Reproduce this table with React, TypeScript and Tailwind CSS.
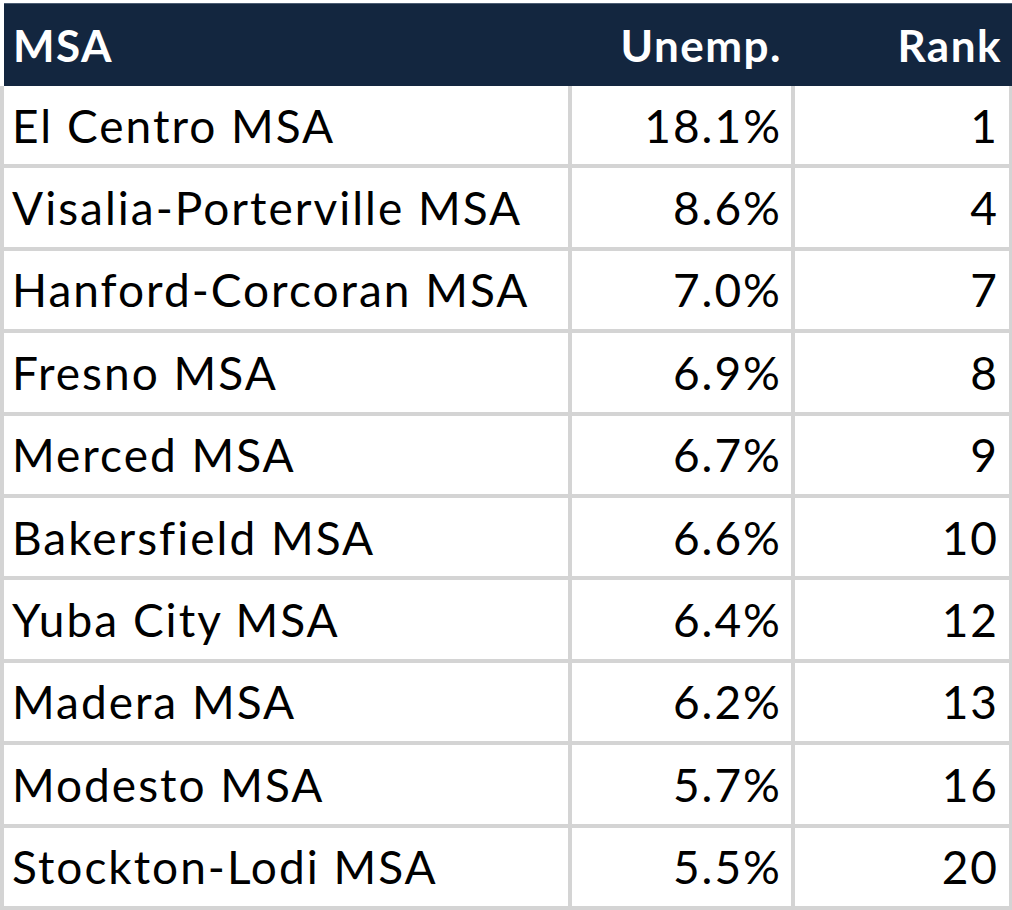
import React from 'react';

const rows = [
  { msa: 'El Centro MSA', unemp: '18.1%', rank: '1' },
  { msa: 'Visalia-Porterville MSA', unemp: '8.6%', rank: '4' },
  { msa: 'Hanford-Corcoran MSA', unemp: '7.0%', rank: '7' },
  { msa: 'Fresno MSA', unemp: '6.9%', rank: '8' },
  { msa: 'Merced MSA', unemp: '6.7%', rank: '9' },
  { msa: 'Bakersfield MSA', unemp: '6.6%', rank: '10' },
  { msa: 'Yuba City MSA', unemp: '6.4%', rank: '12' },
  { msa: 'Madera MSA', unemp: '6.2%', rank: '13' },
  { msa: 'Modesto MSA', unemp: '5.7%', rank: '16' },
  { msa: 'Stockton-Lodi MSA', unemp: '5.5%', rank: '20' },
];

const App = () => {
  return (
    <div
      className="w-[1012px] h-[910px] bg-white overflow-hidden pt-[3px] [font-variant-ligatures:none]"
      style={{ fontFamily: 'Lato, "Liberation Sans", sans-serif' }}
    >
      <div className="ml-[4px] h-[83px] bg-[#13263f] border-t border-[#4b5c72] flex items-center text-white font-bold text-[44px] tracking-[1.5px]">
        <div className="w-[568px] pl-[9px]">MSA</div>
        <div className="w-[223px] text-right pr-[13px]">Unemp.</div>
        <div className="flex-1 text-right pr-[10px]">Rank</div>
      </div>
      <div className="border-l-4 border-r-[3px] border-[#d4d4d4]">
        {rows.map((r) => (
          <div key={r.msa} className="flex h-[82.4px] border-b-4 border-[#d4d4d4] text-[46px] tracking-[2px] text-black">
            <div className="w-[568px] h-full flex items-center pl-[8px] border-r-4 border-[#d4d4d4]">{r.msa}</div>
            <div className="w-[223px] h-full flex items-center justify-end pr-[9px] border-r-4 border-[#d4d4d4]">{r.unemp}</div>
            <div className="flex-1 h-full flex items-center justify-end pr-[10px]">{r.rank}</div>
          </div>
        ))}
      </div>
    </div>
  );
};

export default App;
